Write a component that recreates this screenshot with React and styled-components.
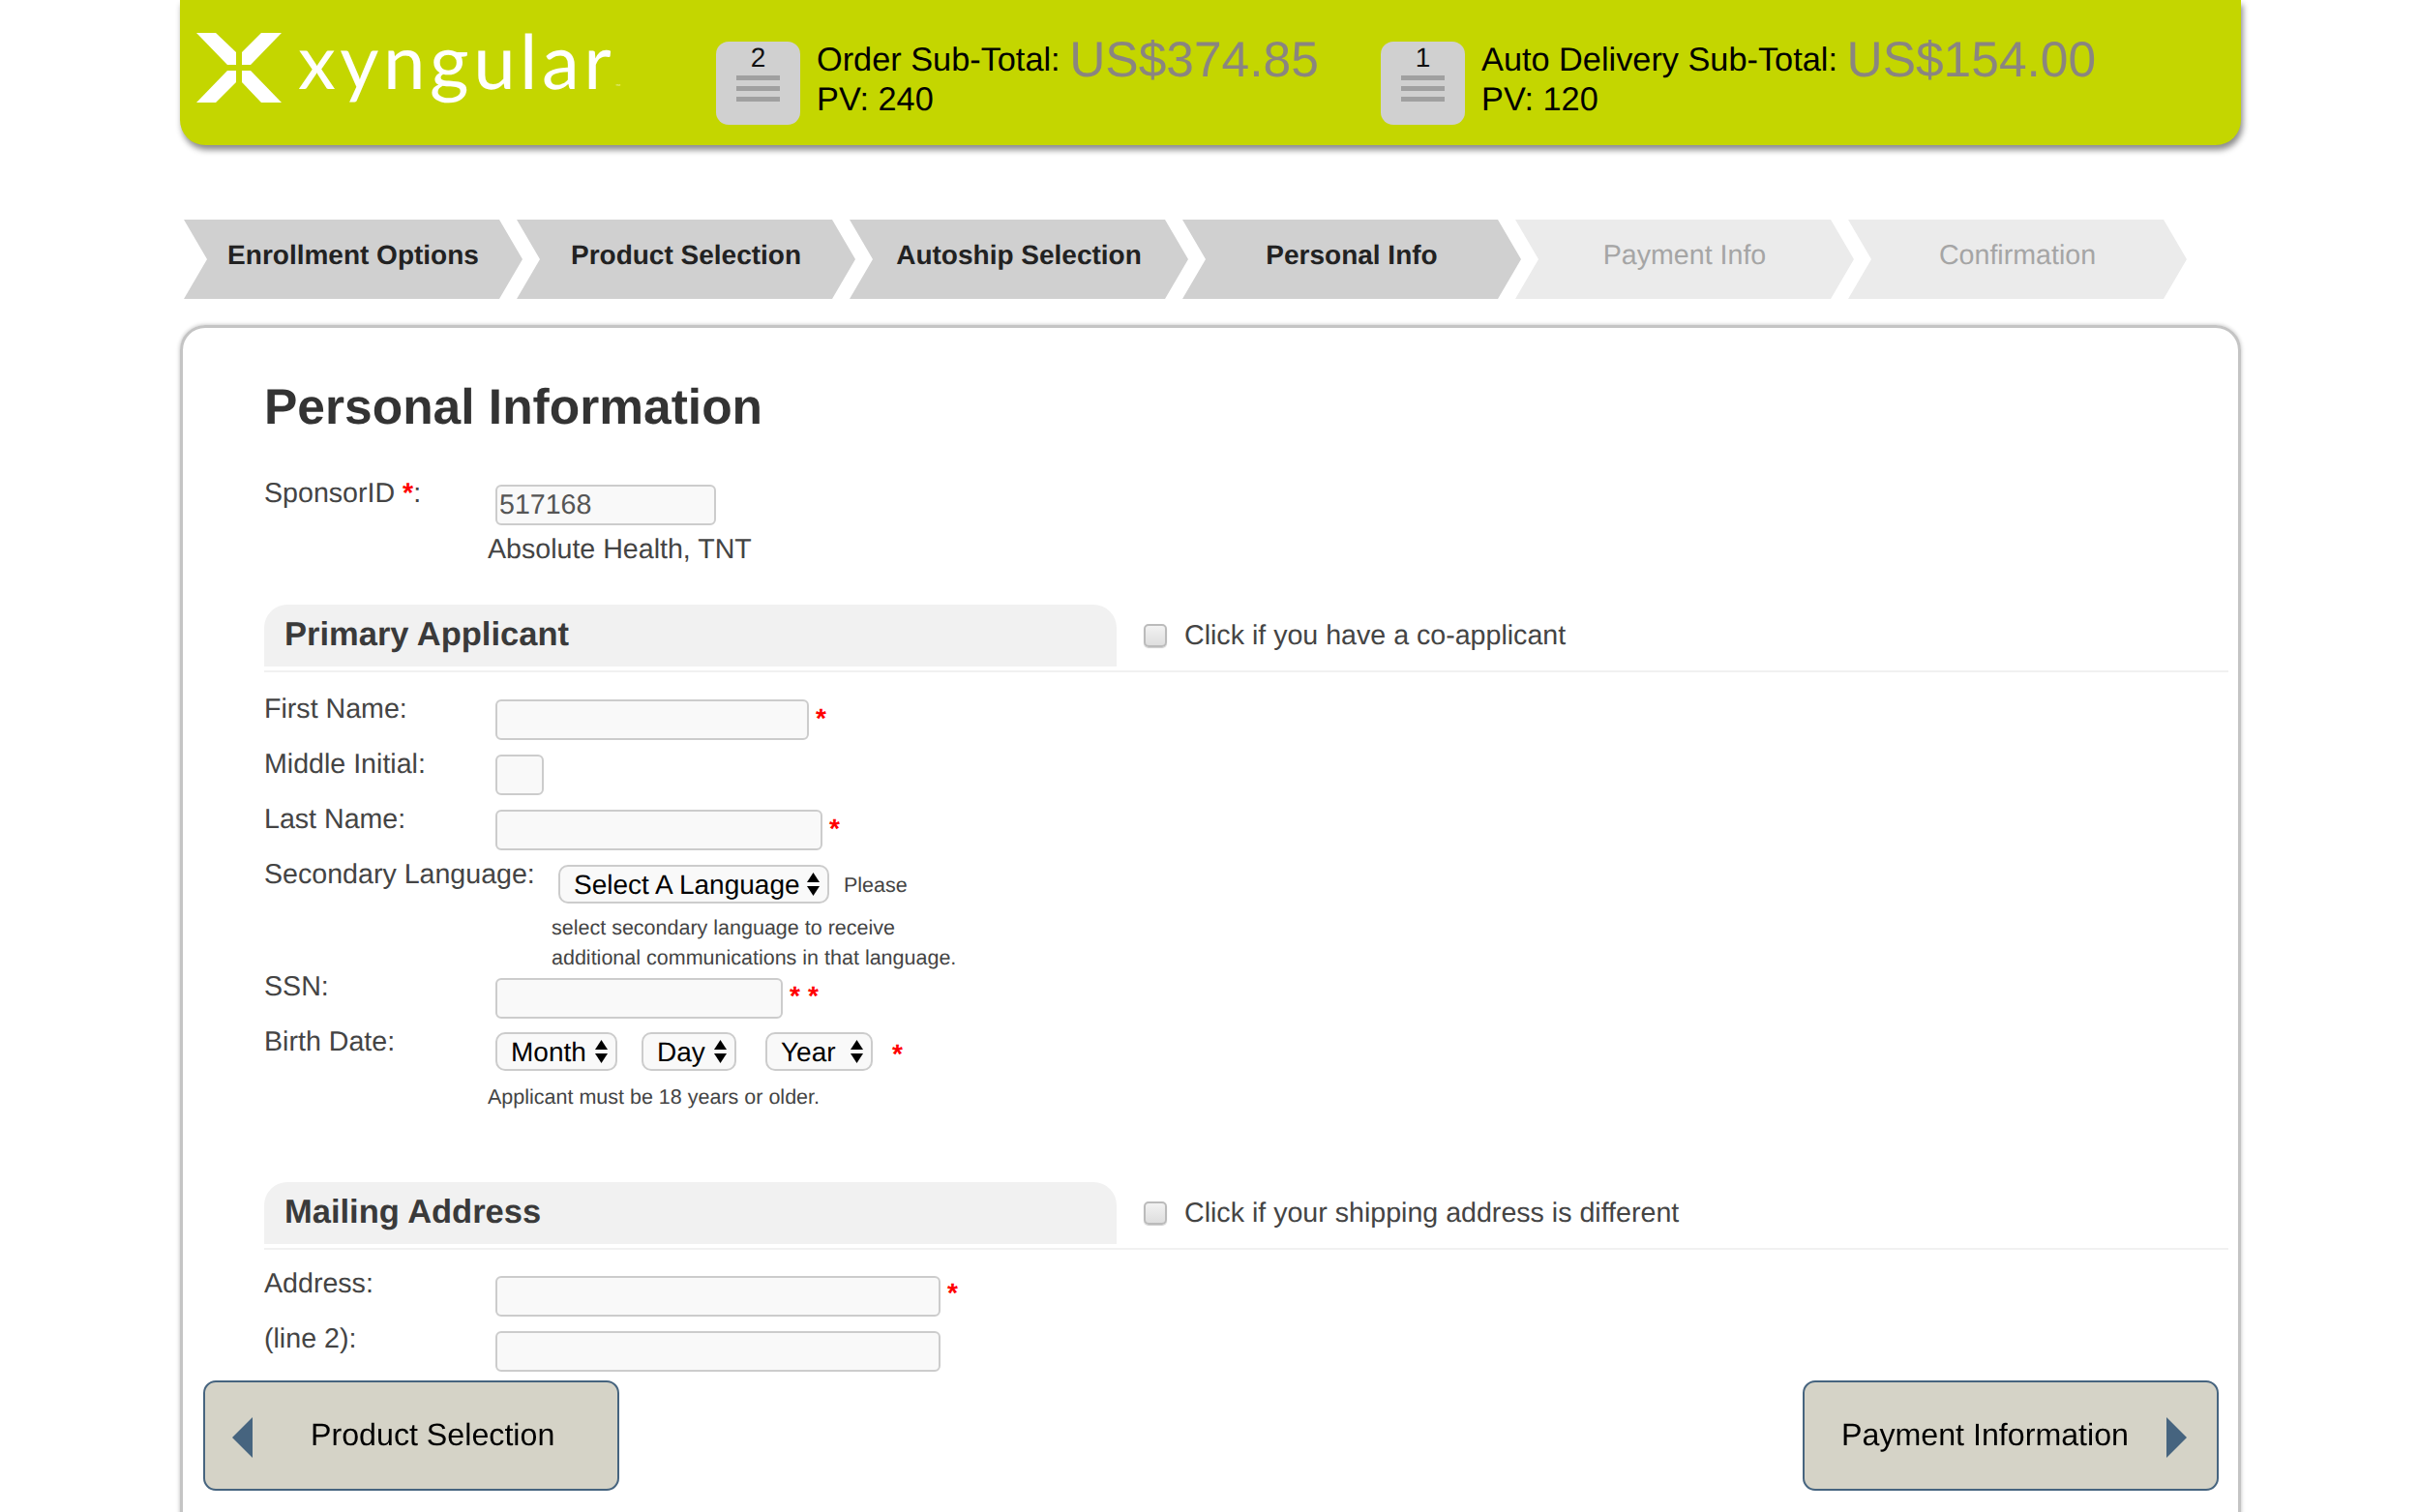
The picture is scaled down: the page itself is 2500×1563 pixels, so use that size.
import React from "react";
import styled, { createGlobalStyle } from "styled-components";

const GlobalStyle = createGlobalStyle`
  html, body {
    margin: 0;
    height: 1563px;
    overflow: hidden;
    background: #fff;
    font-family: "Liberation Sans", Arial, sans-serif;
    text-rendering: geometricPrecision;
  }
`;

const Page = styled.div`
  width: 2130px;
  margin-left: 186px;
`;

const Header = styled.header`
  display: flex;
  align-items: flex-start;
  box-sizing: border-box;
  height: 150px;
  padding: 43px 0 0 17px;
  background: #c4d600;
  border-radius: 0 0 26px 26px;
  box-shadow: 2px 5px 6px #8c8c8c;
`;

const Logo = styled.div`
  display: flex;
  align-items: flex-start;
  flex: none;
  width: 537px;
  height: 72px;
  margin-top: -9px;
  color: #fff;
`;

const LogoWord = styled.span`
  margin: -19px 0 0 17px;
  font-family: Lato, "Liberation Sans", sans-serif;
  font-weight: 400;
  font-size: 78px;
  line-height: 94px;
  letter-spacing: 4.5px;
`;

const LogoTm = styled.span`
  font-size: 7px;
  letter-spacing: 0;
  color: #e8f09a;
`;

const CartItem = styled.div`
  display: flex;
  flex: none;
  width: 687px;
`;

const CartBadge = styled.div`
  display: flex;
  flex-direction: column;
  align-items: center;
  flex: none;
  box-sizing: border-box;
  width: 87px;
  height: 86px;
  margin-right: 17px;
  padding-top: 2px;
  background: #d0d0d0;
  border-radius: 13px;
  color: #111;
  font-size: 28px;
  line-height: 30px;
`;

const BadgeLine = styled.span`
  width: 45px;
  height: 5px;
  margin-top: 6px;
  background: #a0a0a0;
  &:first-of-type {
    margin-top: 3px;
  }
`;

const Totals = styled.div`
  margin-top: -1px;
  color: #000;
  font-size: 34.3px;
  line-height: 41px;
  white-space: nowrap;
`;

const TotalValue = styled.span`
  color: #8a8580;
  font-size: 51.5px;
  line-height: 0;
  vertical-align: -6px;
`;

const Steps = styled.nav`
  display: flex;
  margin: 77px 0 0 4px;
`;

const Step = styled.div`
  display: flex;
  align-items: center;
  justify-content: center;
  flex: none;
  width: 350px;
  height: 82px;
  margin-right: -6px;
  padding-bottom: 8px;
  box-sizing: border-box;
  font-size: ${(p) => (p.$done ? 28 : 28.6)}px;
  font-weight: ${(p) => (p.$done ? "bold" : "normal")};
  color: ${(p) => (p.$done ? "#222" : "#a5a5a5")};
  background: ${(p) => (p.$done ? "#d0d0d0" : "#ebebeb")};
  clip-path: polygon(0 0, calc(100% - 24px) 0, 100% 50%, calc(100% - 24px) 100%, 0 100%, 24px 50%);
`;

const Card = styled.main`
  box-sizing: border-box;
  height: 1400px;
  margin-top: 27px;
  padding: 51px 10px 0 84px;
  border: 3px solid #c4c4c4;
  border-radius: 26px;
  box-shadow: 0 0 4px #bbb;
`;

const Title = styled.h1`
  margin: 0 0 44px;
  font-size: 51.5px;
  line-height: 60px;
  font-weight: bold;
  color: #333;
`;

const Row = styled.div`
  display: flex;
  align-items: flex-start;
  height: ${(p) => p.$height || 57}px;
`;

const Label = styled.label`
  flex: none;
  width: ${(p) => p.$width || 239}px;
  color: #444;
  font-size: 28.6px;
  line-height: 32px;
`;

const Required = styled.span`
  color: #f00;
  font-weight: bold;
`;

const Star = styled(Required)`
  margin: ${(p) => p.$top || 10}px 0 0 ${(p) => p.$left || 7}px;
  font-size: 28px;
  line-height: 32px;
`;

const Field = styled.input`
  flex: none;
  box-sizing: border-box;
  width: ${(p) => p.$width}px;
  height: 42px;
  margin-top: ${(p) => p.$top || 6}px;
  padding: 0 2px;
  background: #f9f9f9;
  border: 2px solid #ccc;
  border-radius: 6px;
  outline: none;
  color: #555;
  font-family: inherit;
  font-size: 28.6px;
  text-rendering: geometricPrecision;
`;

const SelectBox = styled.div`
  position: relative;
  flex: none;
  width: ${(p) => p.$width}px;
  height: 40px;
  margin: ${(p) => p.$top || 6}px 0 0 ${(p) => p.$left || 0}px;
`;

const NativeSelect = styled.select`
  box-sizing: border-box;
  width: 100%;
  height: 100%;
  padding: 0 0 0 14px;
  appearance: none;
  background: #f9f9f9;
  border: 2px solid #ccc;
  border-radius: 10px;
  outline: none;
  color: #000;
  font-family: inherit;
  font-size: 28px;
  text-rendering: geometricPrecision;
`;

const SelectArrows = styled.svg`
  position: absolute;
  top: 8px;
  right: 10px;
  width: 13px;
  height: 24px;
  pointer-events: none;
`;

const Note = styled.div`
  color: #444;
  font-size: 21.5px;
  line-height: 32px;
  margin: ${(p) => p.$margin || 0};
`;

const HelpText = styled.div`
  height: 60px;
  margin-left: 297px;
  color: #444;
  font-size: 21.5px;
  line-height: 31px;
`;

const SponsorName = styled.div`
  margin: 0 0 41px 231px;
  color: #444;
  font-size: 28.6px;
  line-height: 32px;
`;

const SectionHead = styled.div`
  display: flex;
  align-items: center;
  padding-bottom: 4px;
  border-bottom: 2px solid #f1f1f1;
  margin-bottom: ${(p) => p.$gap}px;
`;

const SectionTab = styled.div`
  box-sizing: border-box;
  width: 881px;
  height: 64px;
  padding-left: 21px;
  background: #f1f1f1;
  border-radius: 24px 24px 0 0;
  color: #3a3a3a;
  font-size: 34.5px;
  font-weight: bold;
  line-height: 62px;
`;

const CheckLabel = styled.label`
  display: flex;
  align-items: center;
  margin-left: 28px;
  color: #444;
  font-size: 28.6px;
`;

const Check = styled.input`
  width: 24px;
  height: 24px;
  margin: 0 18px 0 0;
  appearance: none;
  background: linear-gradient(#f2f2f2, #dedede);
  border: 2px solid #bbb;
  border-radius: 5px;
  box-shadow: 0 1px 1px #ccc;
`;

const FooterNav = styled.div`
  position: fixed;
  left: 210px;
  bottom: 22px;
  display: flex;
  justify-content: space-between;
  width: 2083px;
`;

const NavButton = styled.button`
  display: flex;
  align-items: center;
  justify-content: ${(p) => (p.$next ? "flex-end" : "flex-start")};
  box-sizing: border-box;
  width: 430px;
  height: 114px;
  padding: 0 ${(p) => (p.$next ? 31 : 0)}px 0 ${(p) => (p.$next ? 0 : 28)}px;
  background: #d5d3c7;
  border: 2px solid #46647f;
  border-radius: 13px;
  color: #000;
  font-family: inherit;
  font-size: 32.2px;
  text-rendering: geometricPrecision;
`;

const NavLabel = styled.span`
  margin: ${(p) => (p.$next ? "0 39px 2px 0" : "0 0 2px 60px")};
`;

const NavArrow = styled.svg`
  width: 21px;
  height: 42px;
  margin-top: 4px;
  fill: #46647f;
`;

const STEPS = [
  { name: "Enrollment Options", done: true },
  { name: "Product Selection", done: true },
  { name: "Autoship Selection", done: true },
  { name: "Personal Info", done: true },
  { name: "Payment Info", done: false },
  { name: "Confirmation", done: false },
];

const Cart = ({ count, label, total, pv }) => (
  <CartItem>
    <CartBadge>
      {count}
      <BadgeLine />
      <BadgeLine />
      <BadgeLine />
    </CartBadge>
    <Totals>
      {label} <TotalValue>{total}</TotalValue>
      <br />
      PV: {pv}
    </Totals>
  </CartItem>
);

const Select = ({ width, top, left, children }) => (
  <SelectBox $width={width} $top={top} $left={left}>
    <NativeSelect>
      <option>{children}</option>
    </NativeSelect>
    <SelectArrows viewBox="0 0 13 24">
      <polygon points="6.5,0 13,10 0,10" />
      <polygon points="0,14 13,14 6.5,24" />
    </SelectArrows>
  </SelectBox>
);

const App = () => {
  return (
    <Page>
      <GlobalStyle />
      <Header>
        <Logo>
          <svg width="88" height="72" viewBox="0 0 88 72" fill="#fff">
            <polygon points="0,0 20,0 41,20 41,33 32,33" />
            <polygon points="88,0 67,0 47,20 47,33 56,33" />
            <polygon points="0,72 20,72 41,51 41,39 32,39" />
            <polygon points="88,72 67,72 47,51 47,39 56,39" />
          </svg>
          <LogoWord>
            xyngular<LogoTm>™</LogoTm>
          </LogoWord>
        </Logo>
        <Cart count="2" label="Order Sub-Total:" total="US$374.85" pv="240" />
        <Cart count="1" label="Auto Delivery Sub-Total:" total="US$154.00" pv="120" />
      </Header>

      <Steps>
        {STEPS.map((step) => (
          <Step key={step.name} $done={step.done}>
            {step.name}
          </Step>
        ))}
      </Steps>

      <Card>
        <Title>Personal Information</Title>

        <Row $height={58}>
          <Label>
            SponsorID <Required>*</Required>:
          </Label>
          <Field $width={228} $top={7} defaultValue="517168" />
        </Row>
        <SponsorName>Absolute Health, TNT</SponsorName>

        <SectionHead $gap={22}>
          <SectionTab>Primary Applicant</SectionTab>
          <CheckLabel>
            <Check type="checkbox" />
            Click if you have a co-applicant
          </CheckLabel>
        </SectionHead>

        <Row>
          <Label>First Name:</Label>
          <Field $width={324} />
          <Star>*</Star>
        </Row>
        <Row>
          <Label>Middle Initial:</Label>
          <Field $width={50} />
        </Row>
        <Row>
          <Label>Last Name:</Label>
          <Field $width={338} />
          <Star>*</Star>
        </Row>
        <Row $height={56}>
          <Label $width={304}>Secondary Language:</Label>
          <Select width={280}>Select A Language</Select>
          <Note $margin="11px 0 0 15px">Please</Note>
        </Row>
        <HelpText>
          select secondary language to receive
          <br />
          additional communications in that language.
        </HelpText>
        <Row>
          <Label>SSN:</Label>
          <Field $width={297} $top={7} />
          <Star>*</Star>
          <Star $left={8}>*</Star>
        </Row>
        <Row>
          <Label>Birth Date:</Label>
          <Select width={126}>Month</Select>
          <Select width={98} left={25}>Day</Select>
          <Select width={111} left={30}>Year</Select>
          <Star $top={13} $left={20}>*</Star>
        </Row>
        <Note $margin="0 0 72px 231px">Applicant must be 18 years or older.</Note>

        <SectionHead $gap={19}>
          <SectionTab>Mailing Address</SectionTab>
          <CheckLabel>
            <Check type="checkbox" />
            Click if your shipping address is different
          </CheckLabel>
        </SectionHead>

        <Row>
          <Label>Address:</Label>
          <Field $width={460} $top={8} />
          <Star $top={10}>*</Star>
        </Row>
        <Row>
          <Label>(line 2):</Label>
          <Field $width={460} $top={8} />
        </Row>
      </Card>

      <FooterNav>
        <NavButton>
          <NavArrow viewBox="0 0 21 42">
            <polygon points="21,0 21,42 0,21" />
          </NavArrow>
          <NavLabel>Product Selection</NavLabel>
        </NavButton>
        <NavButton $next>
          <NavLabel $next>Payment Information</NavLabel>
          <NavArrow viewBox="0 0 21 42">
            <polygon points="0,0 21,21 0,42" />
          </NavArrow>
        </NavButton>
      </FooterNav>
    </Page>
  );
};

export default App;
